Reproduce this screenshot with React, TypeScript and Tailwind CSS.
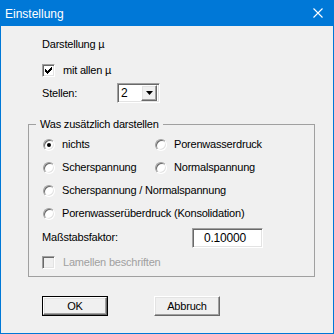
import React from "react";

const sunken =
  "border border-t-[#a0a0a0] border-l-[#a0a0a0] border-b-white border-r-white shadow-[inset_1px_1px_0_#696969,inset_-1px_-1px_0_#e3e3e3]";
const raised =
  "border border-t-white border-l-white border-b-[#696969] border-r-[#696969] shadow-[inset_-1px_-1px_0_#a0a0a0,inset_1px_1px_0_#e3e3e3]";

// klassisches Häkchen, Pixel für Pixel
const checkRows = ["......X", ".....XX", "X...XXX", "XX.XXX.", "XXXXX..", ".XXX...", "..X...."];

function Checkbox({ checked, disabled }: { checked?: boolean; disabled?: boolean }) {
  return (
    <div className={`w-[13px] h-[13px] shrink-0 flex items-center justify-center ${sunken} ${disabled ? "bg-[#f0f0f0]" : "bg-white"}`}>
      {checked && (
        <svg width="7" height="7" viewBox="0 0 7 7" shapeRendering="crispEdges">
          {checkRows.map((row, y) =>
            row.split("").map((c, x) => (c === "X" ? <rect key={`${x}-${y}`} x={x} y={y} width="1" height="1" fill="#000" /> : null))
          )}
        </svg>
      )}
    </div>
  );
}

function Radio({ checked }: { checked?: boolean }) {
  return (
    <div className="w-[12px] h-[12px] shrink-0 rounded-full bg-white border border-t-[#a0a0a0] border-l-[#a0a0a0] border-b-white border-r-white shadow-[inset_1px_1px_0_#696969,inset_-1px_-1px_0_#e3e3e3] flex items-center justify-center">
      {checked && <div className="w-[4px] h-[4px] rounded-full bg-black" />}
    </div>
  );
}

function RadioItem({ label, checked }: { label: string; checked?: boolean }) {
  return (
    <div className="flex items-center gap-[7px] h-[13px]">
      <Radio checked={checked} />
      <span>{label}</span>
    </div>
  );
}

export default function App() {
  return (
    <div
      className="w-[334px] h-[334px] border border-[#0078d7] bg-[#f0f0f0] flex flex-col text-[11px] leading-[13px] text-black tracking-[-0.2px]"
      style={{ fontFamily: '"Liberation Sans", Arial, sans-serif' }}
    >
      {/* Titel */}
      <div className="h-[25px] shrink-0 bg-[#0078d7] flex items-center justify-between pl-[4px] pr-[10px] text-white">
        <span className="text-[12px] leading-[15px] pt-[2px] tracking-normal">Einstellung</span>
        <svg width="10" height="10" viewBox="0 0 10 10" className="mt-[-1px]">
          <path d="M0.5 0.5L9.5 9.5M9.5 0.5L0.5 9.5" stroke="#fff" strokeWidth="1.1" />
        </svg>
      </div>

      <div className="flex flex-col">
        <div className="pl-[41px] mt-[12px]">Darstellung µ</div>

        <div className="pl-[41px] mt-[13px] flex items-center gap-[8px] h-[13px]">
          <Checkbox checked />
          <span>mit allen µ</span>
        </div>

        <div className="pl-[41px] mt-[6px] flex items-center h-[20px]">
          <span className="w-[75px]">Stellen:</span>
          <div className={`w-[43px] h-[20px] bg-white flex items-center justify-between pl-[3px] pr-[2px] ${sunken}`}>
            <span className="text-[12px]">2</span>
            <div className={`w-[16px] h-[16px] bg-[#f0f0f0] flex items-center justify-center ${raised}`}>
              <svg width="7" height="4" viewBox="0 0 7 4">
                <path d="M0 0h7L3.5 4z" fill="#000" />
              </svg>
            </div>
          </div>
        </div>

        <fieldset className="ml-[27px] mt-[15px] w-[287px] border border-[#a0a0a0] pl-[7px] pb-[7px]">
          <legend className="px-[4px]">Was zusätzlich darstellen</legend>
          <div className="pl-[7px] pt-[7px] flex flex-col gap-[10px]">
            <div className="grid grid-cols-[112px_1fr]">
              <RadioItem label="nichts" checked />
              <RadioItem label="Porenwasserdruck" />
            </div>
            <div className="grid grid-cols-[112px_1fr]">
              <RadioItem label="Scherspannung" />
              <RadioItem label="Normalspannung" />
            </div>
            <RadioItem label="Scherspannung / Normalspannung" />
            <RadioItem label="Porenwasserüberdruck (Konsolidation)" />
          </div>

          <div className="pl-[6px] mt-[8px] flex items-center h-[20px]">
            <span className="w-[150px] mt-[-2px]">Maßstabsfaktor:</span>
            <div className={`w-[71px] h-[20px] bg-white flex items-center pl-[11px] text-[12px] ${sunken}`}>
              0.10000
            </div>
          </div>

          <div className="pl-[6px] mt-[8px] flex items-center gap-[8px] h-[13px] text-[#a0a0a0]">
            <Checkbox disabled />
            <span>Lamellen beschriften</span>
          </div>
        </fieldset>

        <div className="pl-[41px] mt-[19px] flex gap-[46px]">
          <button className="w-[66px] h-[20px] border border-black p-0 bg-[#f0f0f0]">
            <div className={`w-full h-full flex items-center justify-center ${raised}`}>OK</div>
          </button>
          <button className={`w-[66px] h-[20px] bg-[#f0f0f0] flex items-center justify-center ${raised}`}>
            Abbruch
          </button>
        </div>
      </div>
    </div>
  );
}
